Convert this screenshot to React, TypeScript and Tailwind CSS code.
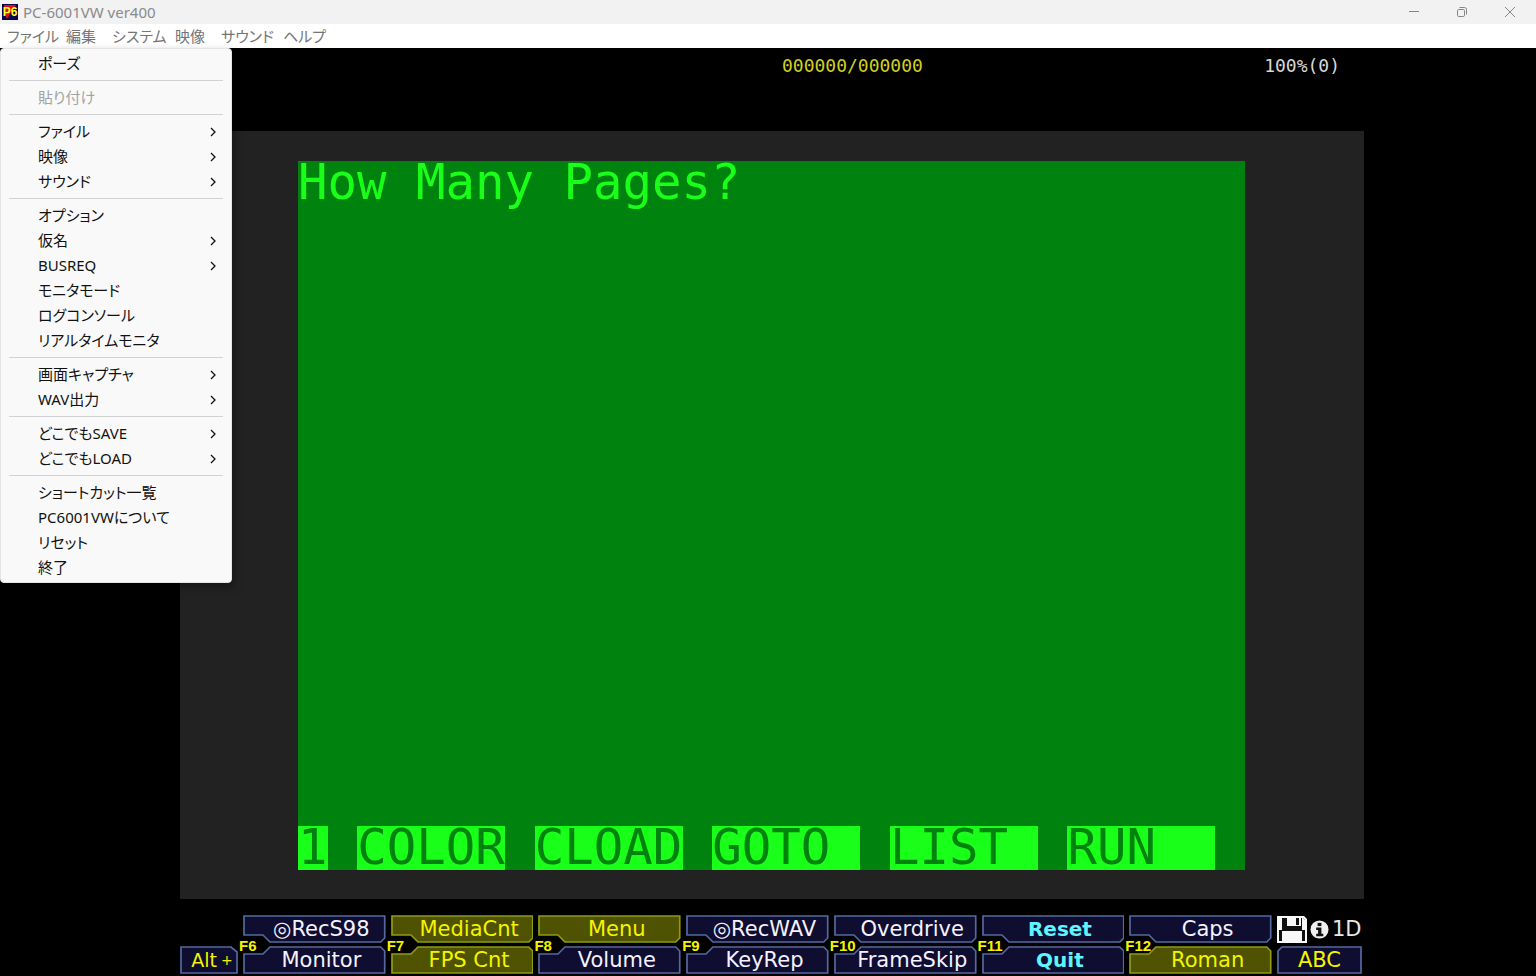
import { Fragment } from "react";

type Tone = "normal" | "active" | "strong";

type SoftKey = { label: string; tone?: Tone };

type KeyPair = { id: string; top: SoftKey; bottom: SoftKey };

type MenuEntry = { label: string; sub?: boolean; disabled?: boolean };

const menuBar = ["ファイル", "編集", "システム", "映像", "サウンド", "ヘルプ"];

const menuGroups: MenuEntry[][] = [
  [{ label: "ポーズ" }],
  [{ label: "貼り付け", disabled: true }],
  [
    { label: "ファイル", sub: true },
    { label: "映像", sub: true },
    { label: "サウンド", sub: true },
  ],
  [
    { label: "オプション" },
    { label: "仮名", sub: true },
    { label: "BUSREQ", sub: true },
    { label: "モニタモード" },
    { label: "ログコンソール" },
    { label: "リアルタイムモニタ" },
  ],
  [
    { label: "画面キャプチャ", sub: true },
    { label: "WAV出力", sub: true },
  ],
  [
    { label: "どこでもSAVE", sub: true },
    { label: "どこでもLOAD", sub: true },
  ],
  [
    { label: "ショートカット一覧" },
    { label: "PC6001VWについて" },
    { label: "リセット" },
    { label: "終了" },
  ],
];

const functionKeys: KeyPair[] = [
  { id: "F6", top: { label: "◎RecS98" }, bottom: { label: "Monitor" } },
  { id: "F7", top: { label: "MediaCnt", tone: "active" }, bottom: { label: "FPS Cnt", tone: "active" } },
  { id: "F8", top: { label: "Menu", tone: "active" }, bottom: { label: "Volume" } },
  { id: "F9", top: { label: "◎RecWAV" }, bottom: { label: "KeyRep" } },
  { id: "F10", top: { label: "Overdrive" }, bottom: { label: "FrameSkip" } },
  { id: "F11", top: { label: "Reset", tone: "strong" }, bottom: { label: "Quit", tone: "strong" } },
  { id: "F12", top: { label: "Caps" }, bottom: { label: "Roman", tone: "active" } },
];

const screenKeys = [
  { label: "1", cell: "col-start-1 col-span-1" },
  { label: "COLOR", cell: "col-start-3 col-span-5" },
  { label: "CLOAD", cell: "col-start-9 col-span-5" },
  { label: "GOTO", cell: "col-start-15 col-span-5" },
  { label: "LIST", cell: "col-start-21 col-span-5" },
  { label: "RUN", cell: "col-start-27 col-span-5" },
];

const toneText: Record<Tone, string> = {
  normal: "text-[21px] text-[#f4f2ff]",
  active: "text-[21px] text-[#f4f400]",
  strong: "text-[20px] font-bold text-[#5ff4ff]",
};

const outlines = {
  top: "M1 1H142V23L138 27H27L20 20H1Z",
  bottom: "M27 1H138L142 5V27H1V8H20Z",
};

function KeyShape({ path, active, box }: { path: string; active?: boolean; box: string }) {
  return (
    <svg
      aria-hidden="true"
      viewBox={box}
      preserveAspectRatio="none"
      className={"absolute inset-0 h-full w-full " + (active ? "fill-[#4f5200] stroke-[#8f9c12]" : "fill-[#0f0d30] stroke-[#5469a0]")}
    >
      <path d={path} strokeWidth="1.7" />
    </svg>
  );
}

function Key({ softKey, side }: { softKey: SoftKey; side: "top" | "bottom" }) {
  const tone = softKey.tone ?? "normal";
  return (
    <button type="button" className="relative flex h-7 w-full items-center justify-center pl-3.5">
      <KeyShape path={outlines[side]} active={tone === "active"} box="0 0 143 28" />
      <span className={"relative leading-7 whitespace-nowrap " + toneText[tone]}>{softKey.label}</span>
    </button>
  );
}

function AppIcon() {
  return (
    <span className="relative flex size-4 items-center justify-center overflow-hidden bg-[#060650]">
      <svg aria-hidden="true" viewBox="0 0 16 16" className="absolute inset-0 size-4">
        <path d="M2 1h12l-3 4-2 3-4 7-2-4z" fill="#e01010" />
      </svg>
      <span className="relative font-['Liberation_Sans'] text-[12px] leading-4 font-bold text-[#ffff20]">P6</span>
    </span>
  );
}

function TitleBar() {
  return (
    <header className="flex h-6 items-center justify-between bg-[#f2f2f2] px-0.5">
      <div className="flex items-center gap-[5px]">
        <AppIcon />
        <h1 className="text-[15px] leading-6 text-[#8a8a8a]">PC-6001VW ver400</h1>
      </div>
      <div className="flex text-[#858585]">
        <button type="button" aria-label="最小化" className="flex h-6 w-12 items-center justify-center">
          <svg viewBox="0 0 12 12" className="size-3" fill="none" stroke="currentColor">
            <path d="M1 5.5h10" />
          </svg>
        </button>
        <button type="button" aria-label="元に戻す" className="flex h-6 w-12 items-center justify-center">
          <svg viewBox="0 0 12 12" className="size-3" fill="none" stroke="currentColor">
            <rect x="1.5" y="3.5" width="7" height="7" rx="1.2" />
            <path d="M3.5 1.5h5a2 2 0 0 1 2 2v5" />
          </svg>
        </button>
        <button type="button" aria-label="閉じる" className="flex h-6 w-12 items-center justify-center">
          <svg viewBox="0 0 12 12" className="size-3" fill="none" stroke="currentColor">
            <path d="M1 1l10 10M11 1L1 11" />
          </svg>
        </button>
      </div>
    </header>
  );
}

function MenuBar() {
  return (
    <nav className="grid h-6 grid-cols-[59px_46px_63px_46px_62px_46px] items-center bg-white pl-[7px] text-[#757575]">
      {menuBar.map((item) => (
        <button key={item} type="button" className="text-left text-[15px] leading-6 whitespace-nowrap">
          {item}
        </button>
      ))}
    </nav>
  );
}

function PopupMenu() {
  return (
    <div className="absolute top-0 left-0 z-10 w-[232px] rounded-[4px] border border-[#e4e4e4] bg-[#f9f9f9] py-0.5 text-[15px] text-[#111] shadow-[2px_4px_8px_rgba(0,0,0,0.35)]">
      {menuGroups.map((group, index) => (
        <Fragment key={group[0].label}>
          {index > 0 && <hr className="mx-2 my-1 border-[#d2d2d2]" />}
          {group.map((entry) => (
            <button
              key={entry.label}
              type="button"
              disabled={entry.disabled}
              className="flex h-[25px] w-full items-center justify-between pr-[15px] pl-[37px] leading-[25px] disabled:text-[#a3a3a3]"
            >
              {entry.label}
              {entry.sub && (
                <svg viewBox="0 0 6 10" className="h-2.5 w-1.5" fill="none" stroke="currentColor" strokeWidth="1.3">
                  <path d="M1 1l4 4-4 4" />
                </svg>
              )}
            </button>
          ))}
        </Fragment>
      ))}
    </div>
  );
}

function StatusLine() {
  return (
    <div className="flex h-[83px] justify-between pt-1.5 pr-6 pl-[602px] font-['DejaVu_Sans_Mono',monospace] text-[18px] leading-6">
      <span className="text-[#d0d020]">000000/000000</span>
      <span className="text-[#d8d8d8]">100%(0)</span>
    </div>
  );
}

function Screen() {
  return (
    <section className="flex flex-1 bg-[#222] pt-[30px] pr-[119px] pb-[29px] pl-[118px]">
      <div className="flex flex-1 flex-col justify-between bg-[#00820e] font-['DejaVu_Sans_Mono',monospace] text-[49px] leading-[44px] text-[#1aff1a]">
        <p className="whitespace-pre">How Many Pages?</p>
        <div className="grid grid-cols-32">
          {screenKeys.map((item) => (
            <span key={item.label} className={"h-11 bg-[#1aff1a] text-[#00820e] " + item.cell}>
              {item.label}
            </span>
          ))}
        </div>
      </div>
    </section>
  );
}

function DriveStatus() {
  return (
    <div className="flex h-7 items-center gap-[3px] text-[21px] text-[#e8e8e8]">
      <svg viewBox="0 0 30 27" className="h-[27px] w-[30px] shrink-0" aria-hidden="true">
        <path d="M0 0H27L30 3V27H0Z" fill="#f8f8f8" />
        <path d="M2 2H26L28 4V25H2Z" fill="#111" />
        <path d="M2 2H5V14H2ZM25 2H26L28 4V14H25Z" fill="#f8f8f8" />
        <rect x="10" y="1" width="14" height="9" fill="#f8f8f8" />
        <rect x="19" y="2" width="3" height="7" fill="#111" />
        <rect x="5" y="15" width="20" height="12" fill="#f8f8f8" />
      </svg>
      <svg viewBox="0 0 20 20" className="size-[19px] shrink-0" aria-hidden="true">
        <circle cx="10" cy="10" r="9.5" fill="#f0f0f0" />
        <rect x="8" y="3" width="4" height="3.4" fill="#111" />
        <path d="M6.500 8H12v6.500h2V17H6.500v-2.500H8.500V10.500H6.500Z" fill="#111" />
      </svg>
      <span className="leading-7">1D</span>
    </div>
  );
}

function KeyBar() {
  return (
    <footer className="grid grid-cols-[58px_repeat(7,minmax(0,1fr))_85px] items-end gap-[5px] pt-4 pr-0.5 pb-0.5 font-['DejaVu_Sans',sans-serif]">
      <button type="button" className="relative flex h-7 items-center justify-center gap-1 pl-1.5 text-[19px] text-[#f4f400]">
        <KeyShape path="M1 1H51L57 6V27H1Z" box="0 0 58 28" />
        <span className="relative">Alt</span>
        <span className="relative text-[14px]">+</span>
      </button>
      {functionKeys.map((pair) => (
        <div key={pair.id} className="relative flex flex-col gap-[3px]">
          <Key softKey={pair.top} side="top" />
          <Key softKey={pair.bottom} side="bottom" />
          <span className="absolute top-[22px] -left-1 font-['Liberation_Sans',sans-serif] text-[15px] leading-[18px] font-bold text-[#f4f400]">
            {pair.id}
          </span>
        </div>
      ))}
      <div className="flex flex-col gap-[3px]">
        <DriveStatus />
        <button type="button" className="relative h-7 text-[21px] leading-7 text-[#f4f400]">
          <KeyShape path="M5 1H84V27H1V5Z" box="0 0 85 28" />
          <span className="relative">ABC</span>
        </button>
      </div>
    </footer>
  );
}

export default function App() {
  return (
    <div className="flex min-h-screen flex-col bg-black font-['Noto_Sans','Noto_Sans_CJK_JP',sans-serif] [font-feature-settings:'palt']">
      <TitleBar />
      <MenuBar />
      <main className="relative flex flex-1 flex-col pr-[172px] pl-[180px]">
        <PopupMenu />
        <StatusLine />
        <Screen />
        <KeyBar />
      </main>
    </div>
  );
}
